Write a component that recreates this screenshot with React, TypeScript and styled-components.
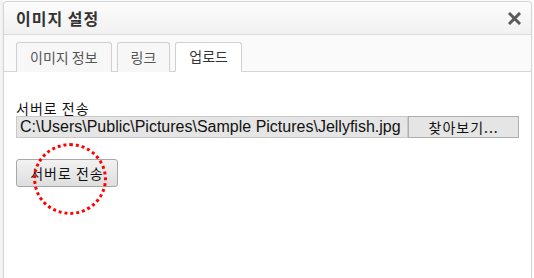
import React, { useState } from 'react';
import styled, { createGlobalStyle } from 'styled-components';

const GlobalStyle = createGlobalStyle`
  html, body {
    margin: 0;
    padding: 0;
    background: #fff;
    overflow: hidden;
  }
  body {
    font-family: "Noto Sans CJK KR", "Liberation Sans", sans-serif;
  }
`;

const tabs = ['이미지 정보', '링크', '업로드'];

const App: React.FC = () => {
  const [current, setCurrent] = useState(2);

  return (
    <Page>
      <GlobalStyle />
      <Dialog>
        <Header>
          <h1>이미지 설정</h1>
          <CloseBtn aria-label="close">
            <svg width="13" height="13" viewBox="0 0 13 13">
              <path d="M2 2 L11 11 M11 2 L2 11" stroke="#5a5a5a" strokeWidth="3" strokeLinecap="square" />
            </svg>
          </CloseBtn>
        </Header>
        <TabBar>
          {tabs.map((t, idx) => (
            <Tab key={t} $active={current === idx} onClick={() => setCurrent(idx)}>
              {t}
            </Tab>
          ))}
        </TabBar>
        <Body>
          <Label>서버로 전송</Label>
          <FileRow>
            <FilePath>C:\Users\Public\Pictures\Sample Pictures\Jellyfish.jpg</FilePath>
            <BrowseBtn>찾아보기...</BrowseBtn>
          </FileRow>
          <SendWrap>
            <SendBtn>서버로 전송</SendBtn>
            {/* 강조 표시용 빨간 점선 원 */}
            <Marker />
          </SendWrap>
        </Body>
      </Dialog>
    </Page>
  );
};

export default App;

const Page = styled.div`
  width: 534px;
  height: 278px;
  padding: 1px 2px 0 3px;
  box-sizing: border-box;
  overflow: hidden;
  background: linear-gradient(to right, #f4f4f4 0 3px, #fff 3px);
`;

const Dialog = styled.div`
  height: 277px;
  box-sizing: border-box;
  border: 1px solid #d4d4d4;
  border-bottom: none;
  border-radius: 4px 4px 0 0;
  background: #fff;
  box-shadow: 0 0 2px rgba(0, 0, 0, 0.08);
`;

const Header = styled.div`
  display: flex;
  align-items: center;
  justify-content: space-between;
  height: 32px;
  padding: 0 10px 0 12px;
  background: linear-gradient(to bottom, #fcfcfc, #f1f1f1);
  border-bottom: 1px solid #dadada;
  border-radius: 4px 4px 0 0;
  > h1 {
    margin: 0;
    font-size: 16px;
    font-weight: 700;
    letter-spacing: 1px;
    color: #333;
  }
`;

const CloseBtn = styled.button`
  display: flex;
  border: none;
  background: none;
  padding: 0;
  cursor: pointer;
`;

const TabBar = styled.div`
  display: flex;
  gap: 5px;
  height: 37px;
  box-sizing: border-box;
  padding: 7px 12px 0;
  background: #fafafa;
  border-bottom: 1px solid #d4d4d4;
`;

const Tab = styled.div<{ $active: boolean }>`
  display: flex;
  align-items: center;
  height: 30px;
  box-sizing: border-box;
  padding: 0 13px 2px;
  border: 1px solid #d0d0d0;
  border-bottom: ${({ $active }) => ($active ? '1px solid #fff' : 'none')};
  border-radius: 3px 3px 0 0;
  background: ${({ $active }) => ($active ? '#fff' : '#f7f7f7')};
  color: ${({ $active }) => ($active ? '#333' : '#555')};
  font-size: 14px;
  cursor: pointer;
`;

const Body = styled.div`
  padding: 28px 12px 0 12px;
`;

const Label = styled.div`
  font-size: 14px;
  line-height: 16px;
  letter-spacing: 1px;
  color: #111;
`;

const FileRow = styled.div`
  display: flex;
`;

const FilePath = styled.div`
  width: 393px;
  height: 22px;
  box-sizing: border-box;
  padding: 0 3px;
  border: 1px solid #c9c9c9;
  background: #e5e5e5;
  font-family: "Liberation Sans", Arial, sans-serif;
  font-size: 16px;
  line-height: 20px;
  color: #111;
  white-space: nowrap;
  overflow: hidden;
`;

const BrowseBtn = styled.button`
  width: 111px;
  height: 22px;
  border: 1px solid #adadad;
  background: #e5e5e5;
  font-family: "Noto Sans CJK KR", sans-serif;
  font-size: 14px;
  color: #111;
  padding: 0;
  letter-spacing: 1px;
`;

const SendWrap = styled.div`
  position: relative;
  margin-top: 21px;
`;

const SendBtn = styled.button`
  width: 102px;
  height: 28px;
  border: 1px solid #a8a8a8;
  border-radius: 3px;
  background: linear-gradient(to bottom, #f2f2f2, #dedede);
  font-family: "Noto Sans CJK KR", sans-serif;
  font-size: 14px;
  color: #111;
  letter-spacing: 1px;
  padding: 0;
`;

const Marker = styled.div`
  position: absolute;
  left: 17px;
  top: -16px;
  width: 68px;
  height: 66px;
  border: 3px dotted #f00;
  border-radius: 50%;
  pointer-events: none;
`;
